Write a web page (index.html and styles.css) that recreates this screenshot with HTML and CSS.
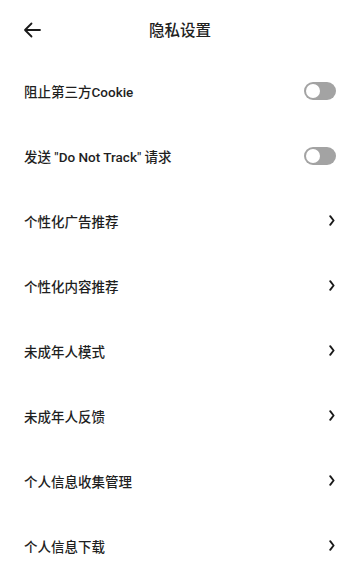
FILE: index.html
```html
<!DOCTYPE html>
<html lang="zh-CN">
<head>
  <meta charset="UTF-8" />
  <meta name="viewport" content="width=device-width, initial-scale=1.0"/>
  <title>隐私设置</title>
  <link rel="stylesheet" href="styles.css">
</head>
<body>

  <header class="topbar">
    <button class="back" aria-label="返回">
      <svg width="18" height="16" viewBox="0 0 18 16">
        <path d="M17 8H2M8.5 1.5L2 8l6.5 6.5" fill="none" stroke="#1a1a1a" stroke-width="1.8" stroke-linecap="round" stroke-linejoin="round"/>
      </svg>
    </button>
    <h1>隐私设置</h1>
  </header>

  <ul class="settings">
    <li class="row">
      <span>阻止第三方Cookie</span>
      <span class="switch"></span>
    </li>
    <li class="row">
      <span>发送 "Do Not Track" 请求</span>
      <span class="switch"></span>
    </li>
    <li class="row">
      <span>个性化广告推荐</span>
      <svg class="chev" width="6" height="11" viewBox="0 0 6 11"><path d="M1.2 1.2L4.6 5.5L1.2 9.8" fill="none" stroke="#1a1a1a" stroke-width="1.9" stroke-linecap="round" stroke-linejoin="round"/></svg>
    </li>
    <li class="row">
      <span>个性化内容推荐</span>
      <svg class="chev" width="6" height="11" viewBox="0 0 6 11"><path d="M1.2 1.2L4.6 5.5L1.2 9.8" fill="none" stroke="#1a1a1a" stroke-width="1.9" stroke-linecap="round" stroke-linejoin="round"/></svg>
    </li>
    <li class="row">
      <span>未成年人模式</span>
      <svg class="chev" width="6" height="11" viewBox="0 0 6 11"><path d="M1.2 1.2L4.6 5.5L1.2 9.8" fill="none" stroke="#1a1a1a" stroke-width="1.9" stroke-linecap="round" stroke-linejoin="round"/></svg>
    </li>
    <li class="row">
      <span>未成年人反馈</span>
      <svg class="chev" width="6" height="11" viewBox="0 0 6 11"><path d="M1.2 1.2L4.6 5.5L1.2 9.8" fill="none" stroke="#1a1a1a" stroke-width="1.9" stroke-linecap="round" stroke-linejoin="round"/></svg>
    </li>
    <li class="row">
      <span>个人信息收集管理</span>
      <svg class="chev" width="6" height="11" viewBox="0 0 6 11"><path d="M1.2 1.2L4.6 5.5L1.2 9.8" fill="none" stroke="#1a1a1a" stroke-width="1.9" stroke-linecap="round" stroke-linejoin="round"/></svg>
    </li>
    <li class="row">
      <span>个人信息下载</span>
      <svg class="chev" width="6" height="11" viewBox="0 0 6 11"><path d="M1.2 1.2L4.6 5.5L1.2 9.8" fill="none" stroke="#1a1a1a" stroke-width="1.9" stroke-linecap="round" stroke-linejoin="round"/></svg>
    </li>
  </ul>

</body>
</html>
```

FILE: styles.css
```css
body {
  margin: 0;
  background: #fff;
  font-family: Roboto, "Noto Sans CJK SC", sans-serif;
  color: #1f1f1f;
}

.topbar {
  position: relative;
  height: 58px;
  display: flex;
  align-items: center;
  justify-content: center;
}

.topbar h1 {
  margin: 0;
  font-size: 15.5px;
  font-weight: 500;
  color: #222;
}

.back {
  position: absolute;
  left: 14px;
  top: 15px;
  width: 36px;
  height: 30px;
  border: none;
  background: none;
  padding: 0;
  display: flex;
  align-items: center;
  justify-content: center;
}

.settings {
  list-style: none;
  margin: 0;
  padding: 0;
}

.row {
  height: 65px;
  padding: 0 25px 0 24px;
  display: flex;
  align-items: center;
  justify-content: space-between;
  font-size: 13.5px;
  font-weight: 500;
  color: #1f1f1f;
}

.switch {
  position: relative;
  width: 32px;
  height: 18px;
  margin-right: -1px;
  border-radius: 9px;
  background: #a3a3a3;
}

.switch::before {
  content: "";
  position: absolute;
  left: 2px;
  top: 2px;
  width: 14px;
  height: 14px;
  border-radius: 50%;
  background: #fff;
}

.chev {
  display: block;
}
```
